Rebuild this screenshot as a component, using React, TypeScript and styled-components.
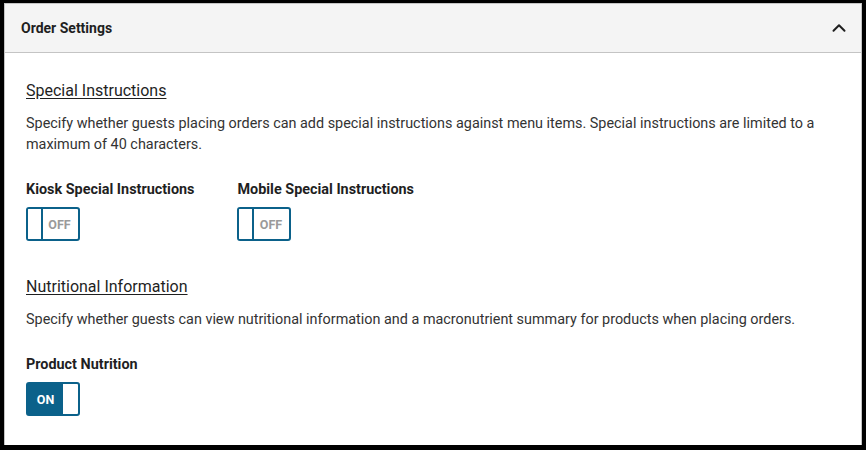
import React, { useState } from "react";
import styled, { createGlobalStyle } from "styled-components";
import { ChevronUp } from "lucide-react";

const GlobalStyle = createGlobalStyle`
  html, body {
    margin: 0;
    padding: 0;
    background: #000;
    font-family: Roboto, "Liberation Sans", Arial, sans-serif;
  }
`;

const Page = styled.div`
  padding: 3px 4px 0 4px;
  height: 450px;
  box-sizing: border-box;
  overflow: hidden;
`;

const Panel = styled.section`
  background: #fff;
  border: 1px solid #c4c4c4;
  border-bottom: none;
  height: 442px;
  box-sizing: border-box;
`;

const Header = styled.header`
  height: 49px;
  box-sizing: border-box;
  display: flex;
  align-items: center;
  justify-content: space-between;
  padding: 0 11px 0 16px;
  background: #f4f4f4;
  border-bottom: 1px solid #c4c4c4;
`;

const Title = styled.h2`
  margin: 0;
  font-size: 14px;
  font-weight: 700;
  color: #1f1f1f;
`;

const Collapse = styled.button`
  display: flex;
  padding: 0;
  border: none;
  background: none;
  color: #1f1f1f;
  cursor: pointer;
`;

const Body = styled.div`
  padding: 28px 21px 0 21px;
`;

const Section = styled.div`
  & + & {
    margin-top: 36px;
  }
`;

const Heading = styled.h3`
  margin: 0;
  font-size: 16px;
  line-height: 20px;
  font-weight: 400;
  color: #1f1f1f;
  text-decoration: underline;
  text-underline-offset: 2px;
`;

const Description = styled.p`
  margin: 12px 0 0 0;
  font-size: 14.4px;
  line-height: 21px;
  color: #333;
`;

const Settings = styled.div`
  display: flex;
  gap: 43px;
  margin-top: 25px;
`;

const Setting = styled.div`
  display: flex;
  flex-direction: column;
  align-items: flex-start;
  gap: 7px;
`;

const Label = styled.label`
  font-size: 14.4px;
  line-height: 20px;
  font-weight: 700;
  color: #1f1f1f;
`;

const Toggle = styled.button<{ $on: boolean }>`
  display: flex;
  flex-direction: ${(p) => (p.$on ? "row-reverse" : "row")};
  width: 54px;
  height: 34px;
  padding: 0;
  box-sizing: border-box;
  border: 2px solid #0b618a;
  border-radius: 3px;
  background: ${(p) => (p.$on ? "#0b618a" : "#fff")};
  overflow: hidden;
  cursor: pointer;
`;

const Knob = styled.span<{ $on: boolean }>`
  width: ${(p) => (p.$on ? "15px" : "13px")};
  height: 100%;
  background: #fff;
  border-right: ${(p) => (p.$on ? "none" : "2px solid #0b618a")};
`;

const State = styled.span<{ $on: boolean }>`
  flex: 1;
  display: flex;
  align-items: center;
  justify-content: center;
  padding-right: ${(p) => (p.$on ? "0" : "2px")};
  font-family: Roboto, "Liberation Sans", Arial, sans-serif;
  font-size: 12.5px;
  font-weight: 700;
  color: ${(p) => (p.$on ? "#fff" : "#9a9a9a")};
`;

const Switch = ({ initial, label }: { initial: boolean; label: string }) => {
  const [on, setOn] = useState(initial);
  return (
    <Setting>
      <Label>{label}</Label>
      <Toggle $on={on} onClick={() => setOn(!on)} aria-pressed={on}>
        <Knob $on={on} />
        <State $on={on}>{on ? "ON" : "OFF"}</State>
      </Toggle>
    </Setting>
  );
};

export default function App() {
  return (
    <Page>
      <GlobalStyle />
      <Panel>
        <Header>
          <Title>Order Settings</Title>
          <Collapse aria-label="Collapse">
            <ChevronUp size={22} strokeWidth={2.2} />
          </Collapse>
        </Header>
        <Body>
          <Section>
            <Heading>Special Instructions</Heading>
            <Description>
              Specify whether guests placing orders can add special instructions against menu items. Special
              instructions are limited to a maximum of 40 characters.
            </Description>
            <Settings>
              <Switch label="Kiosk Special Instructions" initial={false} />
              <Switch label="Mobile Special Instructions" initial={false} />
            </Settings>
          </Section>
          <Section>
            <Heading>Nutritional Information</Heading>
            <Description>
              Specify whether guests can view nutritional information and a macronutrient summary for products
              when placing orders.
            </Description>
            <Settings>
              <Switch label="Product Nutrition" initial={true} />
            </Settings>
          </Section>
        </Body>
      </Panel>
    </Page>
  );
}
